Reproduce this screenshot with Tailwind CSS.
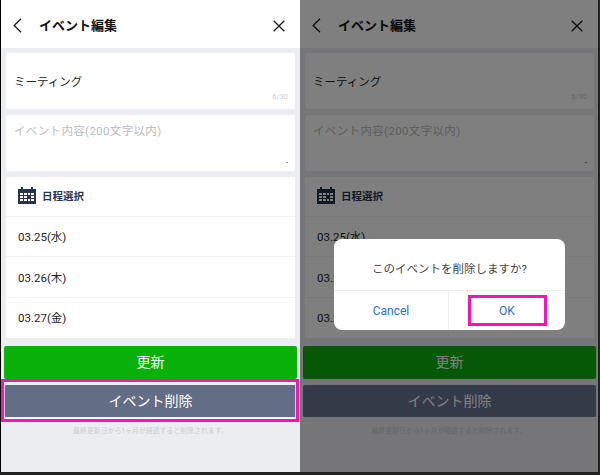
<!DOCTYPE html>
<html lang="ja">
<head>
    <meta charset="UTF-8">
    <title>イベント編集</title>
    <script src="https://cdn.jsdelivr.net/npm/@tailwindcss/browser@4"></script>
</head>
<body class="w-[600px] h-[475px] overflow-hidden bg-[#222] font-['Roboto','Noto_Sans_CJK_JP',sans-serif]">
    <div class="flex h-[472px]">
        <!-- left screen -->
        <div class="relative w-[300px] pl-px bg-black">
            <div class="flex flex-col h-full bg-[#ecedf1]">
                <div class="flex items-center h-12 pt-[3px] bg-white shrink-0">
                    <svg class="ml-[12px] w-[9px] h-[15px]" viewBox="0 0 9 15" fill="none" stroke="#1a1a1a" stroke-width="1.3"><path d="M8 .8 1.200 7.500 8 14.200"/></svg>
                    <span class="ml-[17px] text-[13px] font-bold text-[#111]">イベント編集</span>
                    <svg class="ml-auto mr-[15px] w-[12px] h-[12px]" viewBox="0 0 12 12" fill="none" stroke="#1a1a1a" stroke-width="1.3"><path d="M.7.7l10.600 10.600M11.300.7.700 11.300"/></svg>
                </div>
                <div class="flex flex-col gap-[6px] mt-[5px] mx-[5px]">
                    <div class="relative h-[56px] bg-white rounded-[2px] pl-[8px] pt-[21px] text-[11.500px] leading-[17px] text-[#222]">
                        ミーティング
                        <span class="absolute right-[7px] bottom-[8px] text-[7.500px] leading-[8px] text-[#ccc]">6/30</span>
                    </div>
                    <div class="relative h-[56px] bg-white rounded-[2px] pl-[8px] pt-[8px] text-[11.500px] leading-[17px] tracking-[0.35px] text-[#bbb]">
                        イベント内容(200文字以内)
                        <span class="absolute right-[7px] bottom-[8px] w-[2px] h-px bg-[#999]"></span>
                    </div>
                    <div class="bg-white rounded-[2px] text-[11.500px] text-[#222]">
                        <div class="flex items-center h-[40px] pl-[12px] border-b border-[#f3f3f5]">
                            <svg class="w-[18px] h-[17px] -mt-[2px]" viewBox="0 0 18 17" fill="#27344f"><path d="M0 2h3V0h2v2h8V0h2v2h3v15H0z"/><path fill="#fff" d="M2 6h3v2H2zM6 6h3v2H6zM10 6h2v2h-2zM13 6h3v2h-3zM2 9h3v2H2zM6 9h3v2H6zM13 9h3v2h-3zM2 12h3v2H2zM6 12h3v2H6zM10 12h2v2h-2zM13 12h3v2h-3z"/></svg>
                            <span class="ml-[6px] mt-[1px] text-[10.500px] font-bold text-[#27344f]">日程選択</span>
                        </div>
                        <div class="flex items-center h-[40px] pl-[12px] pt-[3px] border-b border-[#f3f3f5]">03.25(水)</div>
                        <div class="flex items-center h-[41px] pl-[12px] pt-[3px] border-b border-[#f3f3f5]">03.26(木)</div>
                        <div class="flex items-center h-[40px] pl-[12px] pt-[2px]">03.27(金)</div>
                    </div>
                </div>
                <div class="flex flex-col gap-[6px] mt-[8px] mx-[3px]">
                    <div class="flex items-center justify-center h-[33px] bg-[#0bb10b] rounded-[2px] text-[14px] text-white">更新</div>
                    <div class="flex items-center justify-center h-[32px] bg-[#636d85] rounded-[2px] text-[14px] text-white">イベント削除</div>
                </div>
                <p class="mt-[10px] text-center text-[6.900px] leading-[9px] text-[#ccc]">最終更新日から1ヶ月が経過すると削除されます。</p>
            </div>
            <div class="absolute left-[1px] top-[379px] w-[298px] h-[43px] border-[3px] border-[#f315b5] shadow-[inset_0_0_0_1px_#ffffffb0]"></div>
        </div>
        <!-- right screen, dimmed behind the dialog -->
        <div class="relative w-[298px]">
            <div class="flex flex-col h-full bg-[#ecedf1]">
                <div class="flex items-center h-12 pt-[3px] bg-white shrink-0">
                    <svg class="ml-[12px] w-[9px] h-[15px]" viewBox="0 0 9 15" fill="none" stroke="#1a1a1a" stroke-width="1.3"><path d="M8 .8 1.200 7.500 8 14.200"/></svg>
                    <span class="ml-[17px] text-[13px] font-bold text-[#111]">イベント編集</span>
                    <svg class="ml-auto mr-[15px] w-[12px] h-[12px]" viewBox="0 0 12 12" fill="none" stroke="#1a1a1a" stroke-width="1.3"><path d="M.7.7l10.600 10.600M11.300.7.700 11.300"/></svg>
                </div>
                <div class="flex flex-col gap-[6px] mt-[5px] ml-[5px] mr-[4px]">
                    <div class="relative h-[56px] bg-white rounded-[2px] pl-[8px] pt-[21px] text-[11.500px] leading-[17px] text-[#222]">
                        ミーティング
                        <span class="absolute right-[7px] bottom-[8px] text-[7.500px] leading-[8px] text-[#ccc]">6/30</span>
                    </div>
                    <div class="relative h-[56px] bg-white rounded-[2px] pl-[8px] pt-[8px] text-[11.500px] leading-[17px] tracking-[0.35px] text-[#bbb]">
                        イベント内容(200文字以内)
                        <span class="absolute right-[7px] bottom-[8px] w-[2px] h-px bg-[#999]"></span>
                    </div>
                    <div class="bg-white rounded-[2px] text-[11.500px] text-[#222]">
                        <div class="flex items-center h-[40px] pl-[12px] border-b border-[#f3f3f5]">
                            <svg class="w-[18px] h-[17px] -mt-[2px]" viewBox="0 0 18 17" fill="#27344f"><path d="M0 2h3V0h2v2h8V0h2v2h3v15H0z"/><path fill="#fff" d="M2 6h3v2H2zM6 6h3v2H6zM10 6h2v2h-2zM13 6h3v2h-3zM2 9h3v2H2zM6 9h3v2H6zM13 9h3v2h-3zM2 12h3v2H2zM6 12h3v2H6zM10 12h2v2h-2zM13 12h3v2h-3z"/></svg>
                            <span class="ml-[6px] mt-[1px] text-[10.500px] font-bold text-[#27344f]">日程選択</span>
                        </div>
                        <div class="flex items-center h-[40px] pl-[12px] pt-[3px] border-b border-[#f3f3f5]">03.25(水)</div>
                        <div class="flex items-center h-[41px] pl-[12px] pt-[3px] border-b border-[#f3f3f5]">03.26(木)</div>
                        <div class="flex items-center h-[40px] pl-[12px] pt-[2px]">03.27(金)</div>
                    </div>
                </div>
                <div class="flex flex-col gap-[6px] mt-[8px] ml-[3px] mr-[2px]">
                    <div class="flex items-center justify-center h-[33px] bg-[#0bb10b] rounded-[2px] text-[14px] text-white">更新</div>
                    <div class="flex items-center justify-center h-[32px] bg-[#6a7590] rounded-[2px] text-[14px] text-white">イベント削除</div>
                </div>
                <p class="mt-[10px] text-center text-[6.900px] leading-[9px] text-[#ccc]">最終更新日から1ヶ月が経過すると削除されます。</p>
            </div>
            <div class="absolute inset-0 bg-black/50"></div>
            <div class="absolute left-[34px] top-[239px] w-[231px] h-[91px] flex flex-col bg-white rounded-[8px] overflow-hidden">
                <div class="flex items-center justify-center h-[52px] pt-[11px] border-b border-[#eee] text-[11.500px] text-[#444]">このイベントを削除しますか?</div>
                <div class="flex flex-1 text-[12px] text-[#2a6fd6]">
                    <div class="flex items-center justify-center w-[115px] border-r border-[#eee]">Cancel</div>
                    <div class="flex items-center justify-center flex-1">OK</div>
                </div>
            </div>
            <div class="absolute left-[168px] top-[295px] w-[79px] h-[31px] border-[3px] border-[#f315b5]"></div>
        </div>
    </div>
</body>
</html>
